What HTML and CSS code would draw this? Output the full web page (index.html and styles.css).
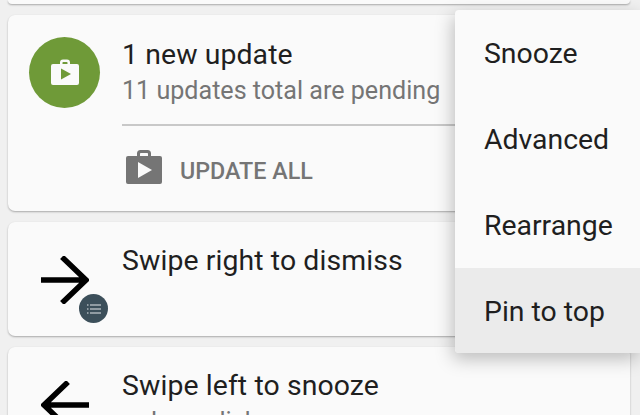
FILE: index.html
```html
<!DOCTYPE html>
<html lang="en">
<head>
<meta charset="utf-8">
<title>Notifications</title>
<link rel="stylesheet" href="styles.css">
</head>
<body>
<div class="screen">
  <div class="stack">
    <div class="card card-stub"></div>
    <div class="card card-update">
      <div class="badge">
        <svg class="badge-icon" viewBox="0 0 28 26"><path fill="#fafafa" d="M9 5V3.500A3 3 0 0 1 12 .5h4a3 3 0 0 1 3 3V5h7a2 2 0 0 1 2 2v17a2 2 0 0 1-2 2H2a2 2 0 0 1-2-2V7a2 2 0 0 1 2-2zM11.500 5h5V3.500a.6.6 0 0 0-.6-.6h-3.800a.6.6 0 0 0-.6.6z"/><path fill="#6f9a38" d="M10 9.500l10 5.500-10 5.500z"/></svg>
      </div>
      <div class="update-body">
        <div class="title">1 new update</div>
        <div class="subtitle">11 updates total are pending</div>
        <div class="divider"></div>
        <div class="action">
          <svg class="action-icon" viewBox="0 0 36 34"><path fill="#757575" d="M11 6V3.500A3.500 3.500 0 0 1 14.500 0h7A3.500 3.500 0 0 1 25 3.500V6h9a2 2 0 0 1 2 2v24a2 2 0 0 1-2 2H2a2 2 0 0 1-2-2V8a2 2 0 0 1 2-2zM14 6h8V3.800a.8.8 0 0 0-.8-.8h-6.400a.8.8 0 0 0-.8.8z"/><path fill="#fafafa" d="M12 12l14 8-14 8z"/></svg>
          <span class="action-label">UPDATE ALL</span>
        </div>
      </div>
    </div>
    <div class="card card-swipe">
      <div class="swipe-icon">
        <svg class="arrow" viewBox="0 0 48 48"><path fill="none" stroke="#000" stroke-width="5.500" d="M0 24H44M21 1L45 24L21 47"/></svg>
        <span class="list-badge">
          <svg viewBox="0 0 14 10"><path fill="none" stroke="#e4e8ea" stroke-width="1.200" d="M0 1h1.500M3 1h11M0 5h1.500M3 5h11M0 9h1.500M3 9h11"/></svg>
        </span>
      </div>
      <div class="swipe-body">
        <div class="title">Swipe right to dismiss</div>
      </div>
    </div>
    <div class="card card-swipe">
      <div class="swipe-icon">
        <svg class="arrow" viewBox="0 0 48 48"><path fill="none" stroke="#000" stroke-width="5.500" d="M48 24H4M27 1L3 24L27 47"/></svg>
      </div>
      <div class="swipe-body">
        <div class="title">Swipe left to snooze</div>
        <div class="subtitle">or long-click</div>
      </div>
    </div>
  </div>
  <div class="menu">
    <div class="menu-item">Snooze</div>
    <div class="menu-item">Advanced</div>
    <div class="menu-item">Rearrange</div>
    <div class="menu-item menu-item-active">Pin to top</div>
  </div>
</div>
</body>
</html>
```

FILE: styles.css
```css
* { box-sizing: border-box; }
html, body { margin: 0; padding: 0; }
body { font-family: Roboto, "Liberation Sans", sans-serif; background: #f0f0f0; }
.screen { position: relative; width: 640px; height: 415px; overflow: hidden; }
.stack { display: flex; flex-direction: column; gap: 11px; padding: 0 10px 0 8px; }
.card { background: #fafafa; border-radius: 7px; box-shadow: 0 1px 2px rgba(0,0,0,.3); flex: none; }
.card-stub { height: 4px; border-radius: 0 0 7px 7px; }
.card-update { height: 196px; display: flex; padding: 22px 0 0 21px; }
.badge { width: 71px; height: 71px; border-radius: 50%; background: #6f9a38; display: flex; align-items: center; justify-content: center; flex: none; }
.badge-icon { width: 28px; height: 26px; margin-top: -2px; }
.update-body { margin-left: 22px; flex: 1; }
.title { font-size: 28.4px; line-height: 36px; letter-spacing: .1px; color: #1f1f1f; }
.subtitle { font-size: 25.1px; line-height: 36px; color: #757575; }
.divider { height: 1.500px; background: #c8c8c8; margin-top: 15px; }
.action { display: flex; align-items: center; gap: 18px; padding: 24px 0 0 4px; }
.action-icon { width: 36px; height: 34px; }
.action-label { font-size: 23.3px; font-weight: 500; color: #757575; padding-top: 7px; }
.card-swipe { height: 114px; display: flex; padding: 21px 0 0 33px; }
.swipe-icon { position: relative; width: 81px; flex: none; }
.arrow { display: block; width: 48px; height: 48px; margin-top: 13px; }
.list-badge { position: absolute; left: 38px; top: 51px; width: 29px; height: 29px; border-radius: 50%; background: #3c4f5a; display: flex; align-items: center; justify-content: center; }
.list-badge svg { width: 14px; height: 10px; }
.menu { position: absolute; right: 0; top: 10px; width: 185px; background: #fafafa; border-radius: 4px 0 0 4px; box-shadow: -2px 6px 18px rgba(0,0,0,.25); display: flex; flex-direction: column; }
.menu-item { height: 86px; padding: 1px 0 0 29px; font-size: 28.4px; line-height: 85px; color: #1f1f1f; }
.menu-item-active { background: #ebebeb; height: 85px; border-radius: 0 0 0 4px; }
```
